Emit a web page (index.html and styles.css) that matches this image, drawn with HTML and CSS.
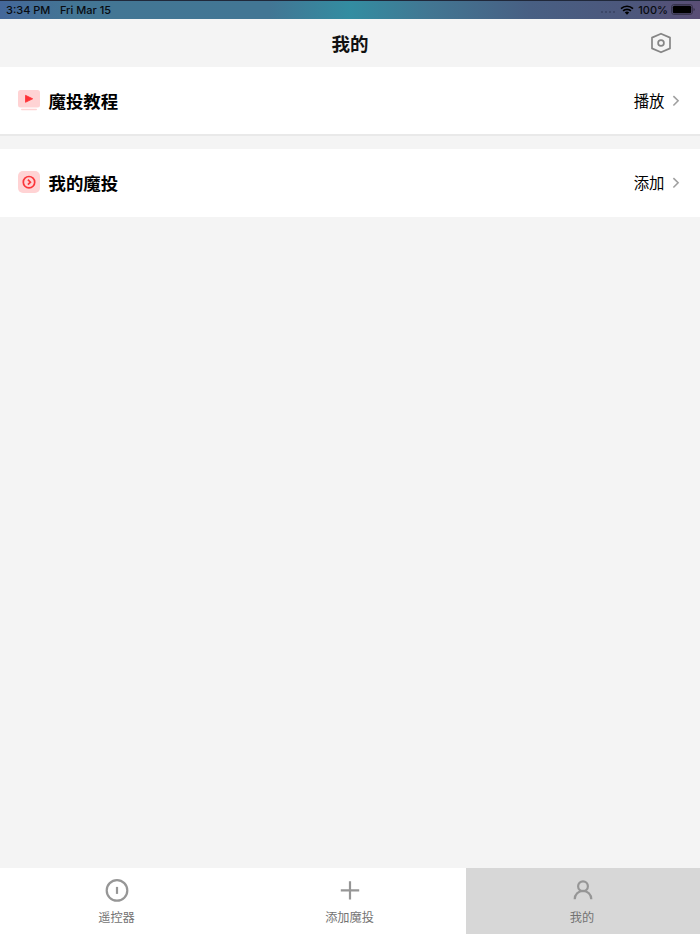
FILE: index.html
```
<!DOCTYPE html>
<html lang="zh-CN">

<head>
    <meta charset="UTF-8">
    <meta name="viewport" content="width=device-width, initial-scale=1.0">
    <title>我的</title>
    <link rel="stylesheet" href="styles.css">
</head>

<body>
    <div class="app">
        <!-- Status bar -->
        <div class="status-bar">
            <span class="time">3:34 PM</span>
            <span class="date">Fri Mar 15</span>
            <span class="dots"><i></i><i></i><i></i><i></i></span>
            <svg class="wifi" width="14" height="10" viewBox="0 0 14 10">
                <path d="M1 3.7a8.6 8.6 0 0 1 12 0M3.1 5.9a5.6 5.6 0 0 1 7.8 0" fill="none" stroke="#000" stroke-width="1.7"/>
                <path d="M4.8 7.6a3.2 3.2 0 0 1 4.4 0L7 9.8z"/>
            </svg>
            <span class="percent">100%</span>
            <svg class="battery" width="24" height="11" viewBox="0 0 24 11">
                <rect x="0.5" y="0.5" width="21" height="10" rx="2.6" fill="none" stroke="#000" stroke-opacity=".35"/>
                <rect x="1.8" y="1.8" width="18.4" height="7.4" rx="1.5"/>
                <path d="M22.6 4a1.6 1.6 0 0 1 0 3z" fill-opacity=".5"/>
            </svg>
        </div>

        <header class="header">
            <h1>我的</h1>
            <svg class="settings" width="22" height="22" viewBox="0 0 22 22">
                <path d="M11 1.7l9 3.9v10.8l-9 3.9-9-3.9V5.6z"/>
                <circle cx="11" cy="11" r="2.9"/>
            </svg>
        </header>

        <main class="content">
            <a class="row">
                <svg class="row-icon" width="22" height="22" viewBox="0 0 22 22">
                    <rect width="22" height="17.5" rx="2.5" fill="#ffd3d4"/>
                    <rect x="3" y="18.8" width="16" height="1.5" rx=".7" fill="#ffd3d4"/>
                    <path d="M7.5 5.3v7l7.2-3.5z" fill="#ff3136" stroke="#ff3136" stroke-width=".8" stroke-linejoin="round"/>
                </svg>
                <span class="row-title">魔投教程</span>
                <span class="row-value">播放</span>
                <svg class="arrow" width="8" height="12" viewBox="0 0 8 12"><path d="M1.4 1.1l4.7 4.7-4.7 4.7"/></svg>
            </a>
            <a class="row">
                <svg class="row-icon" width="22" height="22" viewBox="0 0 22 22">
                    <rect width="22" height="22" rx="5" fill="#ffd3d4"/>
                    <circle cx="11" cy="11.2" r="5.7" fill="none" stroke="#fb363a" stroke-width="1.7"/>
                    <path d="M9.9 8.7l2.5 2.5-2.5 2.5" fill="none" stroke="#fb363a" stroke-width="1.7"/>
                </svg>
                <span class="row-title">我的魔投</span>
                <span class="row-value">添加</span>
                <svg class="arrow" width="8" height="12" viewBox="0 0 8 12"><path d="M1.4 1.1l4.7 4.7-4.7 4.7"/></svg>
            </a>
        </main>

        <!-- Tab bar -->
        <nav class="tabs">
            <a class="tab">
                <svg width="24" height="24" viewBox="0 0 24 24">
                    <circle cx="12" cy="12.4" r="10.3"/>
                    <path d="M12 8.9v7"/>
                </svg>
                <span>遥控器</span>
            </a>
            <a class="tab">
                <svg width="24" height="24" viewBox="0 0 24 24"><path d="M12 3.2v18.4M2.8 12.4h18.4"/></svg>
                <span>添加魔投</span>
            </a>
            <a class="tab active">
                <svg width="24" height="24" viewBox="0 0 24 24">
                    <circle cx="12" cy="8.3" r="4.9"/>
                    <path d="M3.7 21.2a8.3 8.3 0 0 1 16.6 0"/>
                </svg>
                <span>我的</span>
            </a>
        </nav>
    </div>
</body>

</html>
```
FILE: styles.css
```
body {
    margin: 0;
    font-family: "Noto Sans CJK SC", sans-serif;
    background-color: #f4f4f4;
}

.app {
    display: flex;
    flex-direction: column;
    height: 100vh;
    overflow: hidden;
}

/* Status bar */
.status-bar {
    display: flex;
    align-items: center;
    box-sizing: border-box;
    height: 19px;
    padding: 0 5px 1px 6px;
    border-top: 1px solid #20283a;
    background: linear-gradient(90deg, #44679a 0, #437694 75px, #427694 270px, #338da1 350px, #427692 430px, #485f83 530px, #4d567b 640px, #5a4e75 700px);
    font: 500 11px Inter, sans-serif;
    color: #080b10;
}

.date {
    margin-left: 9.5px;
}

.dots {
    display: flex;
    gap: 2px;
    margin: 5px 5px 0 auto;
}

.dots i {
    width: 2.2px;
    height: 2.2px;
    border-radius: 50%;
    background-color: rgba(20, 25, 50, 0.35);
}

.wifi {
    margin-right: 4px;
}

.percent {
    margin-right: 3px;
}

/* Header */
.header {
    position: relative;
    display: flex;
    align-items: center;
    justify-content: center;
    height: 48px;
}

h1 {
    margin: 0 0 1px;
    font-size: 18.5px;
    line-height: 24px;
    font-weight: 700;
    color: #111;
}

.settings {
    position: absolute;
    right: 28px;
    top: 13px;
    fill: none;
    stroke: #858585;
    stroke-width: 1.7;
    stroke-linejoin: round;
}

/* Rows */
.content {
    flex: 1;
    display: flex;
    flex-direction: column;
    gap: 13px;
}

.row {
    display: flex;
    align-items: center;
    box-sizing: border-box;
    height: 67.5px;
    padding: 0 20.5px 0 17.5px;
    background-color: #fff;
}

.row:first-child {
    height: 69px;
    border-bottom: 2px solid #e9e9e9;
}

.row-icon {
    margin-bottom: 1px;
}

.row:first-child .row-icon {
    margin-bottom: 0;
}

.row-title {
    margin-left: 9px;
    padding-top: 1px;
    font-size: 17.4px;
    line-height: 24px;
    font-weight: 700;
    color: #000;
}

.row-value {
    margin-left: auto;
    padding-bottom: 1px;
    font-size: 15.4px;
    line-height: 22px;
    color: #000;
}

.arrow {
    margin-left: 7px;
    fill: none;
    stroke: #a0a0a0;
    stroke-width: 1.6;
}

/* Tab bar */
.tabs {
    display: grid;
    grid-template-columns: 233px 233px 1fr;
    height: 66px;
    background-color: #fff;
}

.tab {
    display: flex;
    flex-direction: column;
    align-items: center;
    padding-top: 10px;
    font-size: 12.2px;
    line-height: 18px;
    color: #737373;
}

.tab svg {
    margin-bottom: 5.5px;
    fill: none;
    stroke: #969696;
    stroke-width: 2.2;
}

.tab.active {
    background-color: #d7d7d7;
}

.tab.active span {
    margin-right: 2px;
}
```
